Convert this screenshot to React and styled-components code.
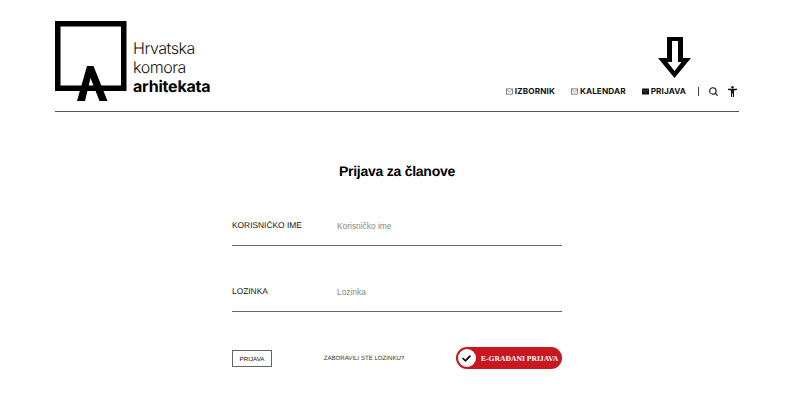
import styled, { createGlobalStyle } from "styled-components";
import { FaCheck } from "react-icons/fa6";

const GlobalStyle = createGlobalStyle`
  html, body {
    margin: 0;
    padding: 0;
    background: #fff;
    color: #000;
    font-family: "Liberation Sans", Arial, sans-serif;
    text-rendering: geometricPrecision;
  }
`;

const Page = styled.div`
  position: relative;
  width: 800px;
  height: 400px;
  overflow: hidden;
`;

const Header = styled.header`
  display: flex;
  align-items: flex-end;
  justify-content: space-between;
  box-sizing: border-box;
  width: 684px;
  height: 112px;
  margin-left: 55px;
  padding: 21px 0 13px;
  border-bottom: 1px solid #555;
`;

const Logo = styled.a`
  display: flex;
  align-items: flex-end;
  align-self: flex-start;
  gap: 6px;
  height: 80px;
`;

const LogoText = styled.div`
  display: flex;
  flex-direction: column;
  margin-bottom: 5px;
  font-family: Inter, "Liberation Sans", sans-serif;
  font-size: 16px;
  font-weight: 300;
  line-height: 19px;
  letter-spacing: -0.45px;
  color: #111;
`;

const LogoBold = styled.span`
  font-weight: 700;
  letter-spacing: -0.2px;
  color: #000;
`;

const Nav = styled.nav`
  display: flex;
  align-items: center;
  height: 14px;
`;

const NavItem = styled.a`
  display: flex;
  align-items: center;
  gap: 2px;
  margin-right: ${({ $gap }) => $gap}px;
  font-family: Inter, "Liberation Sans", sans-serif;
  font-size: 8.2px;
  font-weight: 700;
  letter-spacing: 0.1px;
  color: #111;
`;

const Divider = styled.span`
  width: 1px;
  height: 9px;
  margin: 0 7px 0 12px;
  background: #444;
`;

const IconSlot = styled.span`
  display: flex;
  margin: 0 ${({ $right }) => $right}px 0 ${({ $left }) => $left}px;
`;

const Arrow = styled.svg`
  position: absolute;
  left: 658px;
  top: 37px;
`;

const Main = styled.main`
  display: flex;
  flex-direction: column;
  align-items: center;
`;

const Title = styled.h1`
  margin: 50px 0 0 -6px;
  font-size: 14px;
  line-height: 18px;
  font-weight: 700;
  letter-spacing: -0.25px;
`;

const Form = styled.form`
  display: flex;
  flex-direction: column;
  width: 330px;
  margin: 21px 0 0 -6px;
`;

const Field = styled.label`
  display: flex;
  align-items: flex-end;
  box-sizing: border-box;
  height: 45px;
  margin-bottom: 21px;
  padding-bottom: 14px;
  border-bottom: 1px solid #666;
`;

const FieldLabel = styled.span`
  width: 105px;
  font-size: 8.4px;
  line-height: 11px;
  color: #111;
`;

const FieldInput = styled.input`
  flex: 1;
  min-width: 0;
  height: 11px;
  padding: 0;
  border: 0;
  outline: 0;
  background: none;
  font-family: inherit;
  font-size: 8.4px;

  &::placeholder {
    color: #888;
    opacity: 1;
  }
`;

const Actions = styled.div`
  display: flex;
  align-items: center;
  justify-content: space-between;
  margin-top: 14px;
`;

const SubmitButton = styled.button`
  box-sizing: border-box;
  width: 40px;
  height: 17px;
  padding: 0;
  border: 1px solid #666;
  background: #fff;
  font-family: inherit;
  font-size: 6.2px;
  color: #111;
`;

const Forgot = styled.a`
  font-size: 6.1px;
  color: #333;
`;

const GovButton = styled.a`
  display: flex;
  align-items: center;
  gap: 5px;
  box-sizing: border-box;
  width: 106px;
  height: 22px;
  padding-left: 2px;
  border-radius: 11px;
  background: #c8171f;
  font-family: "Liberation Serif", serif;
  font-size: 7.6px;
  font-weight: 700;
  white-space: nowrap;
  color: #fff;
`;

const GovCheck = styled.span`
  display: flex;
  align-items: center;
  justify-content: center;
  width: 18px;
  height: 18px;
  border-radius: 50%;
  background: #fff;
  color: #111;
  font-size: 9px;

  svg {
    stroke: currentColor;
    stroke-width: 50;
  }
`;

const EnvelopeIcon = ({ filled }) => (
  <svg width="7" height="7" viewBox="0 0 7 7">
    {filled ? (
      <>
        <rect width="7" height="6" y="0.5" fill="#111" />
        <path d="M0.5 1.5 3.5 4 6.5 1.5" fill="none" stroke="#777" strokeWidth="0.6" />
      </>
    ) : (
      <>
        <rect x="0.4" y="0.9" width="6.2" height="5.2" fill="none" stroke="#555" strokeWidth="0.7" />
        <path d="M0.7 1.5 3.5 4 6.3 1.5" fill="none" stroke="#555" strokeWidth="0.6" />
      </>
    )}
  </svg>
);

const LogoMark = () => (
  <svg width="72" height="80" viewBox="0 0 72 80">
    <path d="M2.750 67.250V2.750H68.750V67.250Z" fill="none" stroke="#000" strokeWidth="5.500" />
    <path d="M32 45H38.500L52.500 80H44.500L35.500 57 30 80H22Z" fill="#000" />
  </svg>
);

const App = () => (
  <Page>
    <GlobalStyle />
    <Header>
      <Logo>
        <LogoMark />
        <LogoText>
          <span>Hrvatska</span>
          <span>komora</span>
          <LogoBold>arhitekata</LogoBold>
        </LogoText>
      </Logo>
      <Nav>
        <NavItem $gap={16}>
          <EnvelopeIcon />
          IZBORNIK
        </NavItem>
        <NavItem $gap={16}>
          <EnvelopeIcon />
          KALENDAR
        </NavItem>
        <NavItem $gap={0}>
          <EnvelopeIcon filled />
          PRIJAVA
        </NavItem>
        <Divider />
        <IconSlot $left={3} $right={10}>
          <svg width="9" height="9" viewBox="0 0 9 9">
            <circle cx="3.9" cy="3.9" r="3.2" fill="none" stroke="#111" strokeWidth="1.1" />
            <path d="M6.200 6.200 8.600 8.600" stroke="#111" strokeWidth="1.2" />
          </svg>
        </IconSlot>
        <IconSlot $left={0} $right={2}>
          <svg width="9" height="11" viewBox="0 0 9 11">
            <circle cx="4.500" cy="1.300" r="1.200" fill="#111" />
            <path d="M0 2.800H9V3.900L6 4.500V11H4.900V7.500H4.100V11H3V4.500L0 3.900Z" fill="#111" />
          </svg>
        </IconSlot>
      </Nav>
    </Header>
    <Arrow width="33" height="41" viewBox="0 0 33 41">
      <path
        fillRule="evenodd"
        d="M9 0H25V21H33L16.500 41 0 21H9ZM14 4V25H9.500L16.500 34 23.500 25H20V4Z"
        fill="#000"
      />
    </Arrow>
    <Main>
      <Title>Prijava za članove</Title>
      <Form>
        <Field>
          <FieldLabel>KORISNIČKO IME</FieldLabel>
          <FieldInput placeholder="Korisničko ime" />
        </Field>
        <Field>
          <FieldLabel>LOZINKA</FieldLabel>
          <FieldInput placeholder="Lozinka" />
        </Field>
        <Actions>
          <SubmitButton type="button">PRIJAVA</SubmitButton>
          <Forgot>ZABORAVILI STE LOZINKU?</Forgot>
          <GovButton>
            <GovCheck>
              <FaCheck />
            </GovCheck>
            E-GRAĐANI PRIJAVA
          </GovButton>
        </Actions>
      </Form>
    </Main>
  </Page>
);

export default App;
